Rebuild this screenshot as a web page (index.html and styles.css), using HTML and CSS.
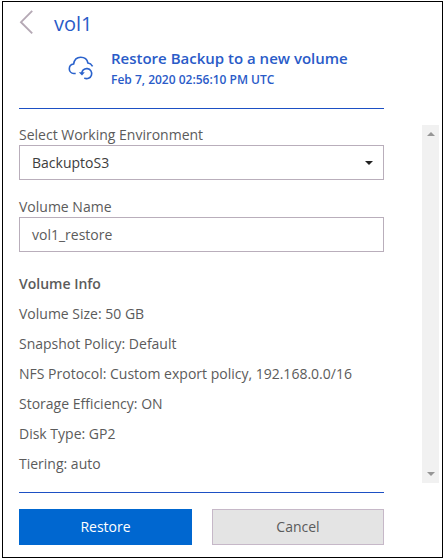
FILE: index.html
```html
<!DOCTYPE html>
<html lang="en">
<head>
<meta charset="utf-8">
<title>vol1</title>
<link rel="stylesheet" href="styles.css">
</head>
<body>
<main class="panel">
  <header class="header">
    <div class="title-row">
      <svg class="back" width="15" height="26" viewBox="0 0 15 26"><path d="M13.200 1.800 2 13.200l11.200 11.200"/></svg>
      <h1 class="title"><span>vol1</span></h1>
    </div>
    <div class="summary">
      <svg class="cloud" width="26" height="25" viewBox="0 0 26 25">
        <path d="M7.700 17.500H5.700A4.700 4.700 0 0 1 1.300 12.900c0-2.700 1.700-4.600 4.300-4.900C6.300 3.800 9.300 1.300 12.700 1.300c3.700 0 6.500 2.300 7.200 5.700 2 .2 3.600 1.500 4.700 3.300"/>
        <path d="M13.700 17.900a5 5 0 1 1 2.600 4.100"/>
        <path class="arrow" d="M10.800 16.300h6l-2.800 3.200z"/>
      </svg>
      <div>
        <h2 class="action"><span>Restore Backup to a new volume</span></h2>
        <p class="date"><span>Feb 7, 2020 02:56:10 PM UTC</span></p>
      </div>
    </div>
  </header>
  <section class="content">
    <div class="form">
      <div class="label"><span>Select Working Environment</span></div>
      <div class="field"><span>BackuptoS3</span><i class="caret"></i></div>
      <div class="label label-next"><span>Volume Name</span></div>
      <div class="field field-input"><span>vol1_restore</span></div>
      <h3 class="info-title"><span>Volume Info</span></h3>
      <ul class="info">
        <li><span>Volume Size: 50 GB</span></li>
        <li><span>Snapshot Policy: Default</span></li>
        <li><span>NFS Protocol: Custom export policy, 192.168.0.0/16</span></li>
        <li><span>Storage Efficiency: ON</span></li>
        <li><span>Disk Type: GP2</span></li>
        <li><span>Tiering: auto</span></li>
      </ul>
    </div>
    <div class="scrollbar"><i class="up"></i><i class="down"></i></div>
  </section>
  <footer class="footer">
    <div class="button primary">Restore</div>
    <div class="button secondary">Cancel</div>
  </footer>
</main>
</body>
</html>
```
FILE: styles.css
```css
* { box-sizing: border-box; }
body {
  margin: 0;
  padding: 1px 0 0 2px;
  height: 559px;
  overflow: hidden;
  background: #fff;
  color: #5b5b5b;
  font: 14px/20px "Open Sans", sans-serif;
}
h1, h2, h3, p, ul { margin: 0; padding: 0; list-style: none; }
.panel {
  width: 441px;
  height: 557px;
  border: 1px solid #000;
  padding: 0 3px 0 16px;
}
.header {
  width: 365px;
  height: 107px;
  border-bottom: 1px solid #1d50c4;
  color: #2a5bc8;
}
.title-row { display: flex; height: 44px; padding-top: 7px; }
.back { fill: none; stroke: #b5a9b5; stroke-width: 1.900; }
.title { margin-left: 20px; font-size: 20px; line-height: 29px; font-weight: 400; }
.summary { display: flex; padding-left: 49px; }
.cloud { margin-top: 10px; fill: none; stroke: #2a62cc; stroke-width: 1.600; }
.cloud .arrow { fill: #2a62cc; stroke: none; }
.summary > div { margin-left: 17px; white-space: nowrap; }
.action { font-size: 15px; line-height: 24px; font-weight: 600; }
.date { font-size: 12px; line-height: 20px; font-weight: 600; }
.content { display: flex; justify-content: space-between; padding-top: 16px; height: 383px; }
.form { width: 365px; }
.label { height: 20px; line-height: 20px; }
.label-next { margin-top: 17px; }
.field {
  height: 35px;
  border: 1px solid #b9aebb;
  display: flex;
  align-items: center;
  justify-content: space-between;
  padding: 0 10px 0 12px;
  color: #3d3d3d;
}
.field-input { color: #5b5b5b; }
.caret { border: 4px solid transparent; border-top-color: #222; border-bottom: 0; }
.info-title { margin-top: 17px; font-size: 14px; line-height: 30px; font-weight: 600; }
.info li { height: 30px; line-height: 30px; }
.scrollbar {
  width: 17px;
  height: 358px;
  background: #f1f1f1;
  display: flex;
  flex-direction: column;
  align-items: center;
  justify-content: space-between;
  padding: 7px 0;
}
.up, .down { border: 4px solid transparent; }
.up { border-bottom-color: #969696; border-top: 0; }
.down { border-top-color: #969696; border-bottom: 0; }
.footer {
  width: 365px;
  border-top: 1px solid #1d50c4;
  padding-top: 16px;
  display: flex;
  gap: 20px;
}
.button { height: 36px; line-height: 36px; text-align: center; }
.primary { width: 173px; background: #0067d0; color: #fff; font-weight: 500; }
.secondary { width: 172px; line-height: 34px; background: #e4e4e4; border: 1px solid #c6b8c8; }
```
